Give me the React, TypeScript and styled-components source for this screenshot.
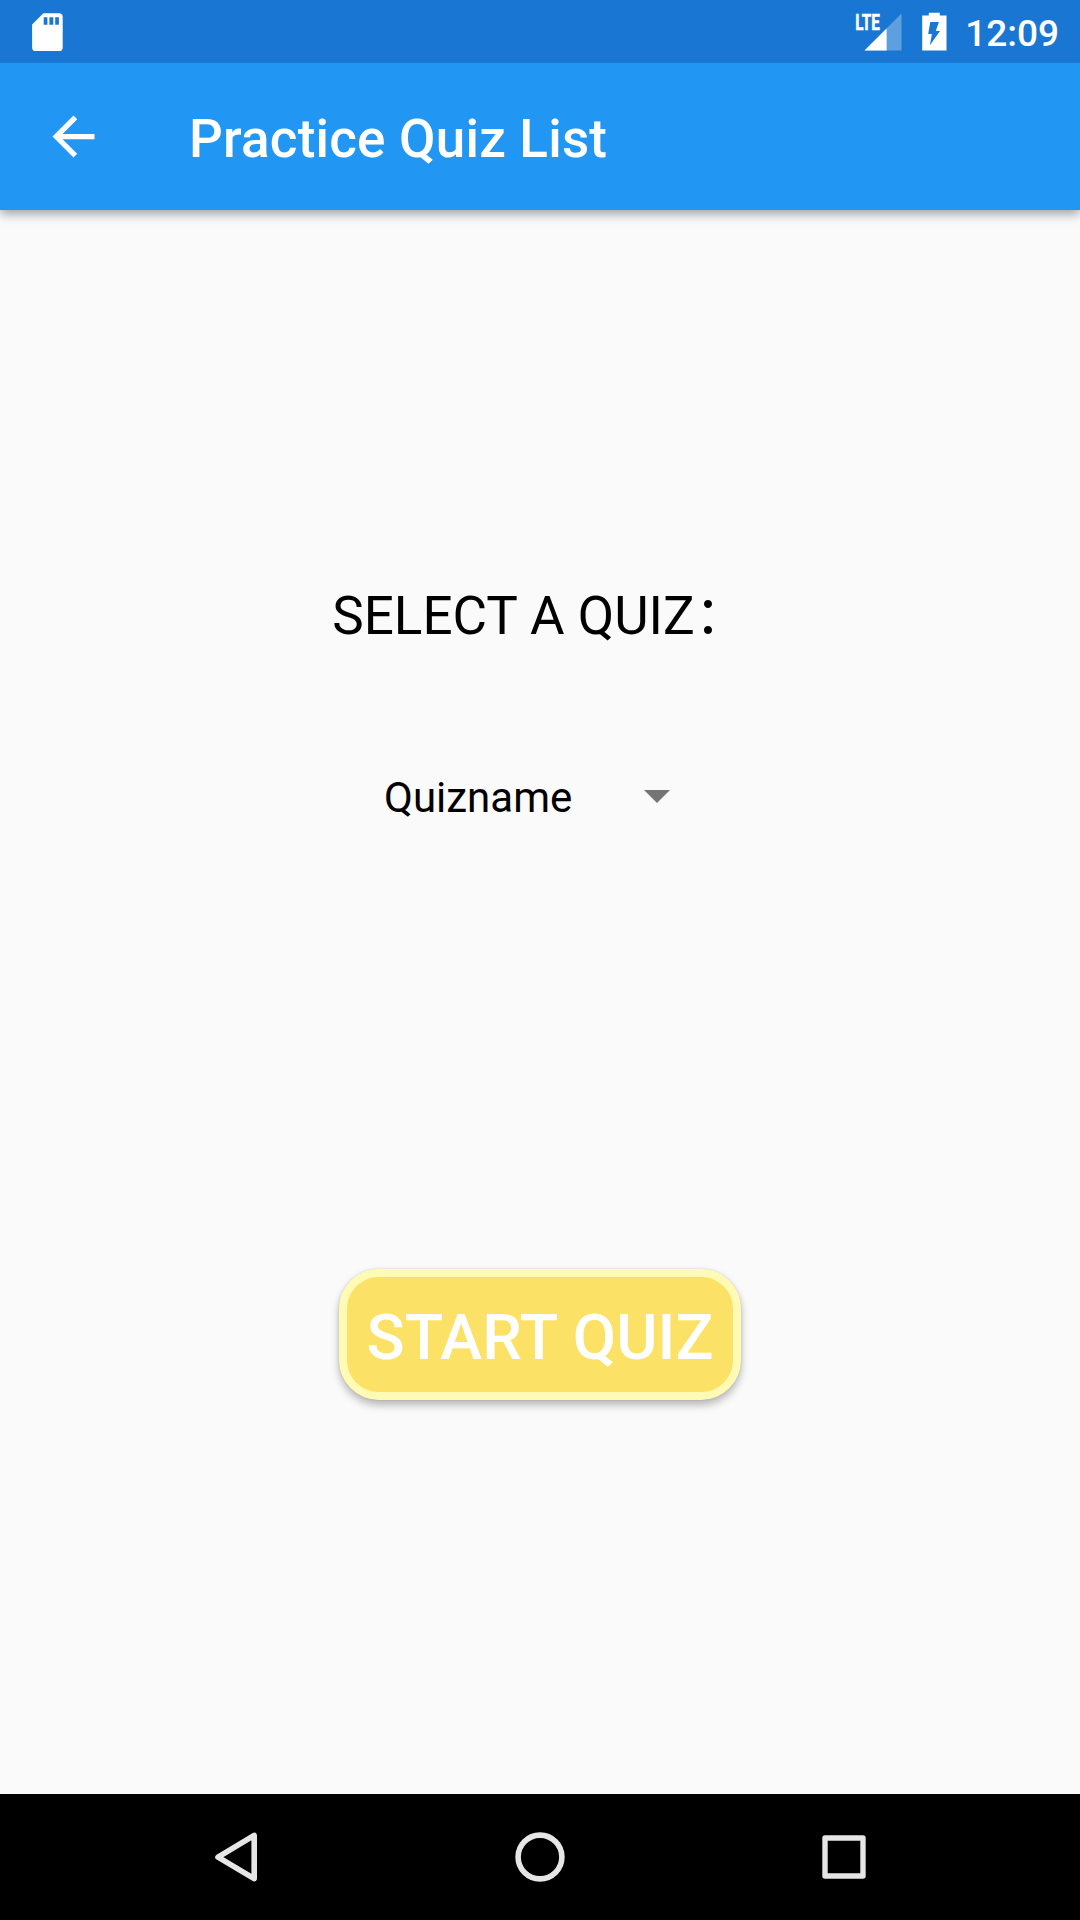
import React from 'react';
import styled, { createGlobalStyle } from 'styled-components';

const GlobalStyle = createGlobalStyle`
  *, *::before, *::after { box-sizing: border-box; }
  body {
    margin: 0;
    background: #fafafa;
    font-family: Roboto, "Noto Sans CJK SC", sans-serif;
  }
`;

const Screen = styled.div`
  display: flex;
  flex-direction: column;
  width: 1080px;
  height: 1920px;
  overflow: hidden;
  background: #fafafa;
`;

const StatusBar = styled.header`
  display: flex;
  align-items: center;
  justify-content: space-between;
  height: 63px;
  flex: none;
  padding: 0 21px 0 26px;
  z-index: 1;
  background: #1976d2;
  color: #fff;
`;

const StatusGroup = styled.div`
  display: flex;
  align-items: center;
  height: 63px;
`;

const Clock = styled.time`
  margin-left: 10.5px;
  font-size: 37px;
  font-weight: 500;
  line-height: 43px;
  padding-top: 3px;
`;

const Toolbar = styled.div`
  display: flex;
  align-items: center;
  height: 147px;
  flex: none;
  padding-left: 42px;
  background: #2196f3;
  color: #fff;
  box-shadow: 0 4px 10px rgba(0, 0, 0, 0.36);
`;

const BackButton = styled.button`
  display: flex;
  padding: 0;
  border: 0;
  background: none;
  color: inherit;
`;

const Title = styled.h1`
  margin: 0 0 0 84px;
  padding-top: 4px;
  font-size: 53px;
  font-weight: 500;
  line-height: 62px;
  letter-spacing: 0.2px;
  white-space: nowrap;
`;

const Content = styled.main`
  display: flex;
  flex-direction: column;
  align-items: center;
  flex: 1;
  padding-top: 375px;
`;

const Prompt = styled.p`
  margin: 0;
  height: 62px;
  font-size: 53px;
  line-height: 62px;
  color: #000;
  white-space: nowrap;
`;

const Spinner = styled.button`
  display: flex;
  align-items: center;
  justify-content: space-between;
  width: 286px;
  height: 50px;
  margin: 126px 26px 0 0;
  padding: 0;
  border: 0;
  background: none;
  color: #000;
  font: 42px/50px Roboto, sans-serif;
`;

const DropdownArrow = styled.svg`
  width: 26px;
  height: 13px;
  margin-bottom: 3px;
  fill: #757575;
`;

const StartButton = styled.button`
  display: flex;
  align-items: center;
  justify-content: center;
  width: 402px;
  height: 131px;
  margin-top: 446px;
  padding: 6px 0 0;
  border: 8px solid #fffbb5;
  border-radius: 40px;
  background: #fbe165;
  color: #fff;
  font: 500 63px/74px Roboto, sans-serif;
  letter-spacing: 0.1px;
  white-space: nowrap;
  box-shadow: 0 5px 8px rgba(0, 0, 0, 0.27), 0 0 3px rgba(0, 0, 0, 0.12);
`;

const NavBar = styled.nav`
  display: flex;
  align-items: center;
  justify-content: space-between;
  height: 126px;
  flex: none;
  padding: 0 206px;
  background: #000;
`;

const NavIcon = styled.svg`
  width: 60px;
  height: 60px;
  fill: none;
  stroke: #e6e6e6;
  stroke-linejoin: round;
`;

const SdCard = () => (
  <svg width="42" height="42" viewBox="0 0 42 42">
    <path
      fill="#fff"
      fillRule="evenodd"
      d="M17.4 2.2H33q3.7 0 3.7 3.7v30.5q0 3.7-3.7 3.7H9.8q-3.7 0-3.7-3.7V13.5zM17.7 6.2v7.6h3.7V6.2zM23.4 6.2v7.6h3.9V6.2zM29.2 6.2v7.6h3.7V6.2z"
    />
  </svg>
);

const SignalIcon = styled.svg`
  width: 50px;
  height: 42px;
  margin-right: 10px;
`;

const Signal = () => (
  <SignalIcon viewBox="0 0 50 42">
    <path fill="#fff" fillOpacity=".3" d="M48.5 2.5v37h-37z" />
    <path fill="#fff" d="M33.6 17.4v22.1H11.5z" />
    <text
      x="2.2"
      y="18.5"
      fill="#fff"
      stroke="#fff"
      strokeWidth=".5"
      fontSize="21.6"
      fontWeight="700"
      textLength="24.6"
      lengthAdjust="spacingAndGlyphs"
    >
      LTE
    </text>
  </SignalIcon>
);

const Battery = () => (
  <svg width="42" height="42" viewBox="0 0 42 42">
    <path
      fill="#fff"
      fillRule="evenodd"
      d="M15.8 1.8h11v2.7h6.7v35H9.2v-35h6.6zM17.3 11.1 15.2 23h3.7l-2 11.3L27 20h-4.2l3.1-8.9z"
    />
  </svg>
);

export default function App() {
  return (
    <>
      <GlobalStyle />
      <Screen>
        <StatusBar>
          <SdCard />
          <StatusGroup>
            <Signal />
            <Battery />
            <Clock>12:09</Clock>
          </StatusGroup>
        </StatusBar>
        <Toolbar>
          <BackButton aria-label="Navigate up">
            <svg width="63" height="63" viewBox="0 0 24 24" fill="currentColor">
              <path d="M20 11H7.83l5.59-5.59L12 4l-8 8 8 8 1.41-1.41L7.83 13H20v-2z" />
            </svg>
          </BackButton>
          <Title>Practice Quiz List</Title>
        </Toolbar>
        <Content>
          <Prompt>SELECT A QUIZ：</Prompt>
          <Spinner>
            Quizname
            <DropdownArrow viewBox="0 0 26 13">
              <path d="M0 0h26L13 13z" />
            </DropdownArrow>
          </Spinner>
          <StartButton>START QUIZ</StartButton>
        </Content>
        <NavBar>
          <NavIcon viewBox="0 0 60 60" strokeWidth="5.6">
            <path d="M48.2 8.4v43.2L12 30.2z" />
          </NavIcon>
          <NavIcon viewBox="0 0 60 60" strokeWidth="5.6">
            <circle cx="30" cy="30" r="21.9" />
          </NavIcon>
          <NavIcon viewBox="0 0 60 60" strokeWidth="5.4">
            <path d="M11 11h38v38H11z" />
          </NavIcon>
        </NavBar>
      </Screen>
    </>
  );
}
